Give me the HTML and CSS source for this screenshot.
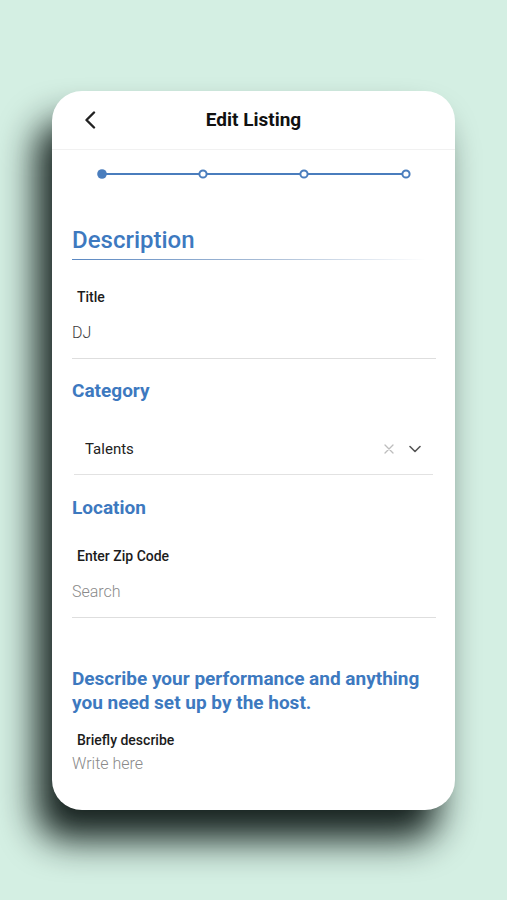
FILE: index.html
```html
<!DOCTYPE html>
<html>
<head>
<meta charset="utf-8">
<link rel="stylesheet" href="styles.css">
</head>
<body>
<div class="card">
  <div class="header">
    <div class="back">
      <svg width="12" height="18" viewBox="0 0 12 18"><path d="M10 1.5 L2.5 9 L10 16.5" fill="none" stroke="#222" stroke-width="2.4" stroke-linecap="round" stroke-linejoin="round"/></svg>
    </div>
    <div class="title">Edit Listing</div>
    <div></div>
  </div>
  <div class="content">
    <svg class="stepper" width="364" height="12" viewBox="0 0 364 12">
      <line x1="30" y1="6" x2="334" y2="6" stroke="#4a7dbd" stroke-width="2"/>
      <circle cx="30" cy="6" r="4.8" fill="#4a7dbd"/>
      <circle cx="131" cy="6" r="3.6" fill="#fff" stroke="#4a7dbd" stroke-width="2"/>
      <circle cx="232" cy="6" r="3.6" fill="#fff" stroke="#4a7dbd" stroke-width="2"/>
      <circle cx="334" cy="6" r="3.6" fill="#fff" stroke="#4a7dbd" stroke-width="2"/>
    </svg>

    <h1 class="section-title">Description</h1>
    <div class="title-rule"></div>

    <div class="label first-label">Title</div>
    <div class="input">DJ</div>

    <h2 class="heading cat">Category</h2>
    <div class="select">
      <span class="select-value">Talents</span>
      <svg class="clear" width="10" height="10" viewBox="0 0 10 10"><path d="M1 1 L9 9 M9 1 L1 9" stroke="#bdbdbd" stroke-width="1.3" stroke-linecap="round"/></svg>
      <svg class="chev" width="12" height="8" viewBox="0 0 12 8"><path d="M1 1.5 L6 6.5 L11 1.5" fill="none" stroke="#555" stroke-width="1.6" stroke-linecap="round" stroke-linejoin="round"/></svg>
    </div>

    <h2 class="heading loc">Location</h2>
    <div class="label zip-label">Enter Zip Code</div>
    <div class="input placeholder">Search</div>

    <h2 class="heading desc">Describe your performance and anything you need set up by the host.</h2>
    <div class="label brief-label">Briefly describe</div>
    <div class="textarea placeholder">Write here</div>
  </div>
</div>
</body>
</html>
```

FILE: styles.css
```css
* { box-sizing: border-box; }
html, body { margin: 0; padding: 0; }
body {
  background: #d4efe3;
  font-family: Roboto, "Liberation Sans", sans-serif;
  width: 507px;
  height: 900px;
  overflow: hidden;
}
.card {
  margin: 91px 0 0 52px;
  width: 403px;
  height: 719px;
  background: #fff;
  border-radius: 30px;
  box-shadow: -16px 30px 36px 0 rgba(12, 22, 20, 0.95);
  overflow: hidden;
}
.header {
  height: 59px;
  border-bottom: 1px solid #f1f1f1;
  display: grid;
  grid-template-columns: 1fr auto 1fr;
  align-items: center;
  padding: 0 0 0 32px;
}
.back { display: flex; align-items: center; }
.back svg { display: block; }
.title {
  font-size: 19px;
  font-weight: 700;
  color: #111;
  line-height: 58px;
  margin-left: -32px;
}
.content {
  padding: 0 19px 0 20px;
}
.stepper {
  display: block;
  margin-top: 18px;
}
.section-title {
  margin: 46px 0 0;
  font-size: 24px;
  line-height: 28px;
  font-weight: 500;
  color: #3d79bf;
}
.title-rule {
  margin-top: 5px;
  height: 1px;
  width: 354px;
  background: linear-gradient(to right, #5a88c2 0%, #a9bdd6 55%, rgba(220,225,232,0) 100%);
}
.label {
  font-size: 14px;
  line-height: 20px;
  font-weight: 500;
  color: #1c1c1c;
  padding-left: 5px;
}
.first-label { margin-top: 27px; }
.input {
  margin-top: 15px;
  font-size: 16px;
  line-height: 22px;
  font-weight: 300;
  color: #3a3a3a;
  padding-bottom: 14px;
  border-bottom: 1px solid #dedede;
}
.placeholder { color: #8a8a8a; }
.heading {
  margin: 0;
  font-size: 19px;
  line-height: 24px;
  font-weight: 700;
  color: #3d79bf;
}
.cat { margin-top: 20px; }
.select {
  margin: 36px 3px 0 2px;
  display: flex;
  align-items: center;
  padding: 0 12px 15px 11px;
  border-bottom: 1px solid #e2e2e2;
}
.select-value {
  flex: 1;
  font-size: 15px;
  line-height: 20px;
  color: #222;
}
.clear { display: block; margin-right: 15px; }
.chev { display: block; }
.loc { margin-top: 21px; }
.zip-label { margin-top: 26px; }
.desc {
  margin-top: 49px;
  font-size: 19px;
  line-height: 24px;
}
.brief-label { margin-top: 15px; }
.textarea {
  margin-top: 3px;
  font-size: 16px;
  line-height: 22px;
  font-weight: 300;
}
```
